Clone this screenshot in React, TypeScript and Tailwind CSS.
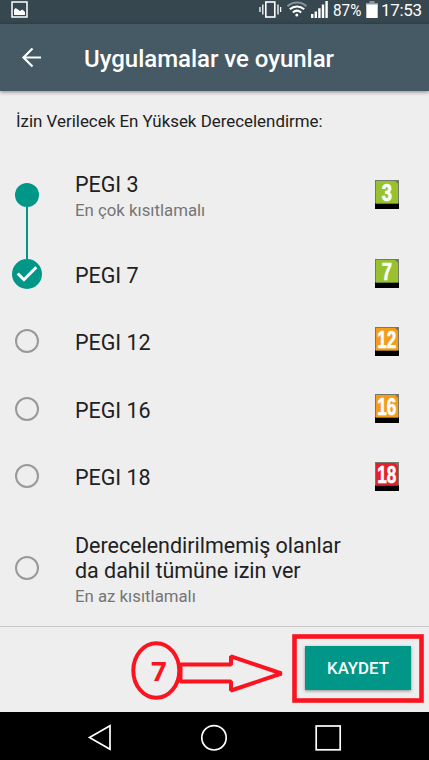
import React from "react";

interface Rating {
  label: string;
  hint?: string;
  badge?: string;
  badgeColor?: string;
  state: "passed" | "selected" | "empty";
  rowClass: string;
}

const ratings: Rating[] = [
  { label: "PEGI 3", hint: "En çok kısıtlamalı", badge: "3", badgeColor: "#97c22c", state: "passed", rowClass: "h-[90px]" },
  { label: "PEGI 7", badge: "7", badgeColor: "#97c22c", state: "selected", rowClass: "h-[68px]" },
  { label: "PEGI 12", badge: "12", badgeColor: "#f59c1c", state: "empty", rowClass: "h-[67px]" },
  { label: "PEGI 16", badge: "16", badgeColor: "#f59c1c", state: "empty", rowClass: "h-[68px]" },
  { label: "PEGI 18", badge: "18", badgeColor: "#e3202b", state: "empty", rowClass: "h-[67px]" },
  {
    label: "Derecelendirilmemiş olanlar da dahil tümüne izin ver",
    hint: "En az kısıtlamalı",
    state: "empty",
    rowClass: "h-[116px]",
  },
];

function StatusBar() {
  return (
    <div className="flex h-6 items-start bg-[#37474f] text-white">
      <svg className="ml-[11px] mt-px h-[17px] w-[17px] shrink-0" viewBox="0 0 17 17" fill="none">
        <rect x="1" y="1" width="15" height="15" stroke="#fff" strokeWidth="1.5" />
        <path d="M3 14V9l1.5-2L7 8.5 9 10l2.5-1.5L14 11v3z" fill="#fff" />
      </svg>
      <svg className="ml-[231px] h-5 w-[120px] shrink-0" viewBox="259 0 120 20" fill="none">
        <rect x="265.8" y="2" width="9" height="15" stroke="#fff" strokeWidth="1.6" />
        <path d="M262.8 4.5v10M278 4.5v10M260 7v5M280.6 7v5" stroke="#fff" strokeWidth="1.3" />
        <path d="M287.5 6.3c5.5-5 13.5-5 19 0" stroke="#87939a" strokeWidth="2" />
        <path d="M289.8 9.3c4.2-3.8 10.2-3.8 14.4 0M292.8 12.5c2.5-2.2 5.9-2.2 8.4 0" stroke="#fff" strokeWidth="2" />
        <circle cx="296.8" cy="15" r="1.5" fill="#fff" />
        <path d="M311 14h2.4v4H311zM314.6 11.5h2.4V18h-2.4zM318.2 8.2h2.4V18h-2.4zM321.8 4.6h2.4V18h-2.4zM325.4 1h2.4v17h-2.4z" fill="#fff" />
        <text x="333" y="15.6" fill="#fff" fontFamily="Roboto, sans-serif" fontSize="16" textLength="28.3" lengthAdjust="spacingAndGlyphs">
          87%
        </text>
        <path d="M369.5 1h5v2h3.5v3h-12V3h3.5z" fill="#8a969c" />
        <path d="M366.3 4.5h11.4V18h-11.4z" fill="#fff" />
      </svg>
      <span className="ml-[2px] mt-[1px] text-[17px] leading-[19px] tracking-[-0.3px]">17:53</span>
    </div>
  );
}

function Marker({ state }: { state: Rating["state"] }) {
  if (state === "passed") {
    return (
      <div className="relative h-6 w-6 rounded-full bg-[#009688]">
        <div className="absolute left-[11px] top-5 h-[58px] w-[2px] bg-[#009688]" />
      </div>
    );
  }
  if (state === "selected") {
    return (
      <svg className="relative h-[30px] w-[30px]" viewBox="0 0 30 30" fill="none">
        <circle cx="15" cy="15" r="15" fill="#009688" />
        <path d="M5.7 14.5l6.2 6.2L24.3 8.3" stroke="#fff" strokeWidth="3" />
      </svg>
    );
  }
  return <div className="mb-px h-6 w-6 rounded-full border-2 border-[#999]" />;
}

function Badge({ text, color }: { text: string; color: string }) {
  const wide = text.length > 1;
  return (
    <svg className="h-[29px] w-6 shrink-0 overflow-visible" viewBox="0 0 24 29">
      <rect width="24" height="29" fill="#000" />
      <rect width="24" height="23.5" fill="#77786c" />
      <rect x="1" y="1" width="22" height="22.5" fill={color} />
      <path d="M20 1h3v3z" fill="#77786c" />
      <text
        x={wide ? 2.2 : 6.8}
        y="20.6"
        fill="#fff"
        stroke="#fff"
        strokeWidth="0.7"
        fontFamily="'Liberation Sans', Arial, sans-serif"
        fontWeight="700"
        fontSize="24"
        textLength={wide ? 19 : 10.2}
        lengthAdjust="spacingAndGlyphs"
      >
        {text}
      </text>
    </svg>
  );
}

function RatingRow({ rating }: { rating: Rating }) {
  return (
    <div className={`flex shrink-0 items-center ${rating.rowClass}`}>
      <div className="flex w-[54px] shrink-0 justify-center">
        <Marker state={rating.state} />
      </div>
      <div className={`ml-[21px] w-[280px] ${rating.hint ? "pt-[5px]" : "pt-[3px]"}`}>
        <div className="text-[21.5px] leading-[25.5px] tracking-[-0.02px] text-[#212121]">{rating.label}</div>
        {rating.hint && <div className="text-[16.8px] leading-[25px] text-[#757575]">{rating.hint}</div>}
      </div>
      {rating.badge && rating.badgeColor && (
        <div className="mb-px ml-[20px]">
          <Badge text={rating.badge} color={rating.badgeColor} />
        </div>
      )}
    </div>
  );
}

function NavBar() {
  return (
    <div className="h-12 bg-black">
      <svg className="h-12 w-full" viewBox="0 0 429 48" fill="none" stroke="#fff" strokeWidth="1.7">
        <path d="M110 13.8v23.4L89.5 25.6z" />
        <circle cx="214" cy="25.8" r="12.2" />
        <rect x="316.2" y="14" width="24" height="23.8" />
      </svg>
    </div>
  );
}

export default function App() {
  return (
    <div className="relative flex h-[760px] w-[429px] flex-col overflow-hidden bg-[#eee] font-[Roboto,'Noto_Sans',sans-serif]">
      <StatusBar />
      <header className="z-10 flex h-[67px] shrink-0 items-center bg-[#455a64] text-white shadow-[0_1px_4px_rgba(0,0,0,0.45)]">
        <svg className="ml-[21px] h-5 w-5" viewBox="0 0 20 20" fill="none" stroke="#fff" strokeWidth="2.2">
          <path d="M20 9.5H2.5M11.5 .5L2.5 9.5l9 9" />
        </svg>
        <h1 className="ml-[43px] pt-[2px] text-[24px] font-medium leading-7 tracking-[-0.03px]">Uygulamalar ve oyunlar</h1>
      </header>
      <main className="flex h-[535px] shrink-0 flex-col">
        <div className="h-[59px] shrink-0 pl-4 pt-[20px] text-[16.9px] leading-5 text-[#212121]">
          İzin Verilecek En Yüksek Derecelendirme:
        </div>
        {ratings.map((rating) => (
          <RatingRow key={rating.label} rating={rating} />
        ))}
      </main>
      <footer className="flex h-[86px] shrink-0 items-start justify-end border-t border-[#c8c8c8] pr-[18px] pt-[19px]">
        <button className="h-[44px] w-[106px] bg-[#009688] pt-[2px] text-[16.8px] font-medium text-white shadow-[0_1px_3px_rgba(0,0,0,0.4)]">
          KAYDET
        </button>
      </footer>
      <NavBar />
      {/* step callout drawn over the footer */}
      <svg className="absolute left-0 top-[626px] h-[86px] w-[429px]" viewBox="0 626 429 86" fill="none" stroke="#fb1420" strokeWidth="4">
        <ellipse cx="156.3" cy="670.5" rx="23" ry="27.3" />
        <path d="M180.5 664.5H231v-8.2L281.5 673.5 231 690.5v-9h-50.5z" strokeLinejoin="bevel" />
        <rect x="294.5" y="636.5" width="127" height="64" strokeWidth="4.6" />
        <text x="151" y="681" fill="#fb1420" stroke="none" fontFamily="'Noto Sans', sans-serif" fontWeight="700" fontSize="27.5">
          7
        </text>
      </svg>
    </div>
  );
}
